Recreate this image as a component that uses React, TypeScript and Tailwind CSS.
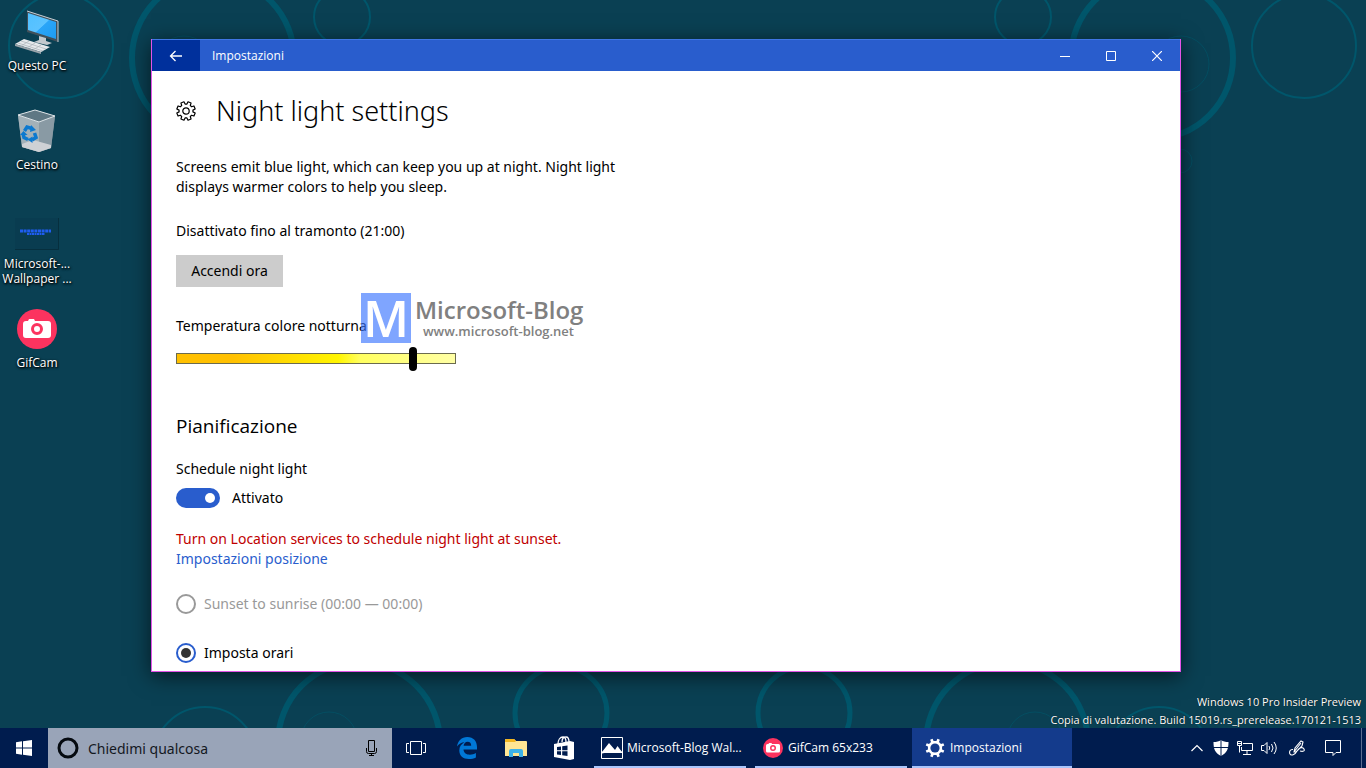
import { useState } from 'react';
import type { ReactNode } from 'react';
import clsx from 'clsx';

type Ring = { cx: number; cy: number; r: number; width: number };

// Wallpaper rings hanging from the top edge
const topRings: Ring[] = [
  { cx: 61, cy: 46, r: 52, width: 2 },
  { cx: 213, cy: 58, r: 81, width: 6 },
  { cx: 184, cy: 64, r: 28, width: 1 },
  { cx: 342, cy: 17, r: 28, width: 2 },
  { cx: 1023, cy: 17, r: 28, width: 2 },
  { cx: 1152, cy: 58, r: 81, width: 6 },
  { cx: 1181, cy: 64, r: 28, width: 1 },
  { cx: 1180, cy: 161, r: 12, width: 1 },
  { cx: 1304, cy: 46, r: 52, width: 2 },
];

// Wallpaper rings rising behind the taskbar
const bottomRings: Ring[] = [
  { cx: 205, cy: 759, r: 52, width: 2 },
  { cx: 359, cy: 743, r: 81, width: 6 },
  { cx: 329, cy: 740, r: 28, width: 1 },
  { cx: 561, cy: 713, r: 46, width: 5 },
  { cx: 804, cy: 713, r: 46, width: 5 },
  { cx: 1007, cy: 743, r: 81, width: 6 },
  { cx: 1035, cy: 740, r: 28, width: 1 },
  { cx: 1159, cy: 759, r: 52, width: 2 },
];

const Wallpaper = () => (
  <svg
    className="absolute inset-0 h-full w-full"
    viewBox="0 0 1366 768"
    preserveAspectRatio="xMidYMid slice"
    fill="none"
    stroke="#00566b"
    aria-hidden="true"
  >
    {[...topRings, ...bottomRings].map((ring) => (
      <circle
        key={`${ring.cx}-${ring.cy}`}
        cx={ring.cx}
        cy={ring.cy}
        r={ring.r}
        strokeWidth={ring.width}
        opacity={ring.width === 1 ? 0.6 : 1}
      />
    ))}
  </svg>
);

const PcIcon = () => (
  <svg width="44" height="44" viewBox="0 0 44 44" aria-hidden="true">
    <defs>
      <linearGradient id="screen" x1="0" y1="0" x2="1" y2="1">
        <stop offset="0" stopColor="#4fc0ff" />
        <stop offset="0.5" stopColor="#5cc3ff" />
        <stop offset="0.52" stopColor="#2aa5f8" />
        <stop offset="1" stopColor="#1d9bf0" />
      </linearGradient>
    </defs>
    <path d="M12 1l31 10v21L12 22z" fill="#41505a" />
    <path d="M12 1l31 10v21" fill="none" stroke="#c7d0d6" />
    <path d="M13 3l28 9v17L13 20z" fill="url(#screen)" />
    <path d="M24 26l7 2v3l6 2-5 2-13-3 5-2z" fill="#c3c9ce" />
    <path d="M9 29l26 8-9 5L0 34z" fill="#e6e9ec" />
    <path d="M26 42v2L0 36v-2z" fill="#9aa3aa" />
    <path d="M6 31l25 8M3 33l25 8M14 31l-8 5M20 33l-8 5M26 35l-8 5" stroke="#aab1b7" strokeWidth="0.7" />
  </svg>
);

const BinIcon = () => (
  <svg width="40" height="44" viewBox="0 0 40 44" aria-hidden="true">
    <path d="M1 6l17-5 20 6-4 32-12 4L5 38z" fill="#81929b" />
    <path d="M1 6l21 7v30L5 38z" fill="#a3b1b8" />
    <path d="M22 13l16-6-4 32-12 4z" fill="#899aa4" />
    <path d="M1 6l17-5 20 6-16 6z" fill="#5f7884" stroke="#dce3e7" />
    <path d="M5 35l11-4 18 5v3l-12 4-17-5z" fill="#ced1d5" />
    <g fill="none" stroke="#0c79cf" strokeWidth="3.500">
      <path d="M7.500 22l2.500-4 5 1.500" />
      <path d="M17.500 24l1.500 4.500-4 2.500" />
      <path d="M11 30.500l-4-2-1-4" />
    </g>
    <path d="M14 16l5 5-6 2zM15.500 27.500v6.500l-5-3.500zM3 26l3.500-4 4 4z" fill="#0c79cf" />
  </svg>
);

const WallpaperFileIcon = () => (
  <svg width="44" height="32" viewBox="0 0 44 32" aria-hidden="true">
    <rect width="44" height="32" fill="#093c50" />
    <path d="M0 31.5h43.500V0" fill="none" stroke="#062f3e" />
    <path d="M5 13h31" stroke="#1e5df0" strokeWidth="3" strokeDasharray="3 0.6" />
    <path d="M12 16h18" stroke="#1e5df0" strokeWidth="2" strokeDasharray="2 0.5" />
  </svg>
);

const CamIcon = ({ size }: { size: number }) => (
  <svg width={size} height={size} viewBox="0 0 40 40" aria-hidden="true">
    <circle cx="20" cy="20" r="20" fill="#fc335f" />
    <path d="M9 12h2l1-2h5l1 2h13a3 3 0 0 1 3 3v11a3 3 0 0 1-3 3H9a3 3 0 0 1-3-3V15a3 3 0 0 1 3-3z" fill="#fff" />
    <circle cx="20" cy="20" r="4.500" fill="#fff" stroke="#fc335f" strokeWidth="3" />
  </svg>
);

// Eight teeth around a 20x20 box, starting half a step off the vertical
const gear = (outer: number, root: number, tip: number, base: number) => {
  const at = (radius: number, deg: number) => {
    const a = (deg * Math.PI) / 180;
    return `${(10 + radius * Math.sin(a)).toFixed(2)} ${(10 - radius * Math.cos(a)).toFixed(2)}`;
  };
  const points = Array.from({ length: 8 }, (_, i) => {
    const mid = i * 45 + 22.5;
    return [at(root, mid - base), at(outer, mid - tip), at(outer, mid + tip), at(root, mid + base)].join('L');
  });
  return `M${points.join('L')}Z`;
};

const SettingsIcon = () => (
  <svg width="20" height="20" viewBox="0 0 20 20" fill="none" stroke="#000" strokeWidth="1.200" aria-hidden="true">
    <path d={gear(9.4, 7, 10, 15)} strokeLinejoin="round" />
    <circle cx="10" cy="10" r="3.200" />
  </svg>
);

const SettingsTaskIcon = () => (
  <svg width="20" height="20" viewBox="0 0 20 20" aria-hidden="true">
    <path d={gear(9.6, 7.2, 8, 11)} fill="#fff" />
    <circle cx="10" cy="10" r="4.600" fill="#143b8c" />
  </svg>
);

const PhotosIcon = () => (
  <svg width="22" height="22" viewBox="0 0 22 22" aria-hidden="true">
    <path d="M.5.5h21v21H.5z" fill="none" stroke="#fff" />
    <path d="M1 15L8 6l6 7 2.500-4L21 15v1l-2.500-2-1.500 2-2.500-2-1.500 2-2.500-3-2.500 2-2-2-2.500 3L1 16.500z" fill="#fff" />
    <path d="M1 15l4-2 4-1 5 1 3-1 4 3v1H1z" fill="#fff" />
  </svg>
);

const desktopIcons = [
  { name: 'Questo PC', lines: ['Questo PC'], icon: <PcIcon /> },
  { name: 'Cestino', lines: ['Cestino'], icon: <BinIcon /> },
  { name: 'Microsoft-Blog Wallpaper', lines: ['Microsoft-...', 'Wallpaper ...'], icon: <WallpaperFileIcon />, low: true },
  { name: 'GifCam', lines: ['GifCam'], icon: <CamIcon size={40} /> },
];

const DesktopIcons = () => (
  <div className="relative flex w-[74px] flex-col pt-2">
    {desktopIcons.map((item) => (
      <button key={item.name} className="flex h-[99px] flex-col items-center text-white">
        <span className={clsx('flex h-12 justify-center', item.low ? 'items-end pb-1' : 'items-center')}>{item.icon}</span>
        <span className="pt-[2px] text-[12px] leading-[15px] whitespace-nowrap [text-shadow:1px_1px_2px_#000,0_1px_3px_#000]">
          {item.lines.map((line) => (
            <span key={line} className="block">{line}</span>
          ))}
        </span>
      </button>
    ))}
  </div>
);

const TitleBar = () => (
  <header className="flex h-8 shrink-0 items-stretch border-t border-[#3f76e4] bg-[#295dcd] font-['Open_Sans',sans-serif] text-white">
    <button aria-label="Indietro" className="flex w-12 items-center justify-center bg-[#00309c]">
      <svg width="14" height="12" viewBox="0 0 14 12" fill="none" stroke="#fff" strokeWidth="1.300">
        <path d="M13 6H1.500M6.500 1l-5 5 5 5" />
      </svg>
    </button>
    <span className="flex-1 self-center pl-3 text-[12px] leading-4">Impostazioni</span>
    <button aria-label="Riduci a icona" className="flex w-[46px] items-center justify-center">
      <svg width="10" height="10" stroke="#fff"><path d="M0 5.500h10" /></svg>
    </button>
    <button aria-label="Ingrandisci" className="flex w-[46px] items-center justify-center">
      <svg width="10" height="10" fill="none" stroke="#fff"><path d="M.5.5h9v9h-9z" /></svg>
    </button>
    <button aria-label="Chiudi" className="flex w-[46px] items-center justify-center">
      <svg width="10" height="10" stroke="#fff" strokeWidth="1.200"><path d="M0 0l10 10M10 0L0 10" /></svg>
    </button>
  </header>
);

// Blog logo laid over the settings page
const BlogMark = () => (
  <div className="pointer-events-none absolute top-[222px] left-[209px] flex font-['Open_Sans',sans-serif]">
    <span className="flex h-[50px] w-[50px] items-center justify-center bg-[#3a75ff]/65 text-[50px] leading-[50px] font-semibold text-white">
      M
    </span>
    <div className="pl-1 whitespace-nowrap text-[#808080]">
      <p className="pt-1 text-[24px] leading-[26px] font-semibold">Microsoft-Blog</p>
      <p className="pl-2 text-[13px] leading-4 font-semibold">www.microsoft-blog.net</p>
    </div>
  </div>
);

const SettingsWindow = () => {
  const [temperature, setTemperature] = useState(86);
  const [scheduled, setScheduled] = useState(true);
  const [mode, setMode] = useState('custom');

  return (
    <main className="absolute inset-x-[151px] top-[39px] bottom-24 mr-[34px] flex flex-col overflow-hidden border-x border-b border-[#e353e8] bg-white font-['Noto_Sans',sans-serif] text-[14px] leading-5 text-black shadow-[0_4px_20px_rgba(0,0,0,0.6)]">
      <TitleBar />
      <div className="relative flex-1 overflow-hidden px-6">
        <div className="flex items-center gap-5 pt-5">
          <SettingsIcon />
          <h1 className="text-[27px] leading-10 font-light">Night light settings</h1>
        </div>
        <p className="w-[460px] pt-[26px]">
          Screens emit blue light, which can keep you up at night. Night light displays warmer colors to help you sleep.
        </p>
        <p className="pt-6">Disattivato fino al tramonto (21:00)</p>
        <button className="mt-[14px] block h-8 w-[107px] bg-[#cccccc]">Accendi ora</button>
        <label htmlFor="temperature" className="block pt-[29px]">Temperatura colore notturna</label>
        <input
          id="temperature"
          type="range"
          value={temperature}
          onChange={(e) => setTemperature(Number(e.target.value))}
          className="mt-[17px] block h-[11px] w-[280px] appearance-none border border-[#6b6b4e] bg-[linear-gradient(90deg,#ffc000_0%,#ffc000_20%,#fff500_58%,#ffff60_66%,#ffffa5_100%)] [&::-webkit-slider-thumb]:h-6 [&::-webkit-slider-thumb]:w-2 [&::-webkit-slider-thumb]:appearance-none [&::-webkit-slider-thumb]:rounded-full [&::-webkit-slider-thumb]:bg-black"
        />
        <h2 className="pt-[50px] font-['Open_Sans',sans-serif] text-[19px] leading-6">Pianificazione</h2>
        <p className="pt-[21px]" id="schedule-label">Schedule night light</p>
        <label className="mt-[9px] flex h-5 items-center gap-3">
          <input
            type="checkbox"
            role="switch"
            aria-labelledby="schedule-label"
            checked={scheduled}
            onChange={(e) => setScheduled(e.target.checked)}
            className="flex h-5 w-11 appearance-none items-center justify-end rounded-full bg-[#295dcd] px-[5px] before:h-[10px] before:w-[10px] before:rounded-full before:bg-white"
          />
          <span>{scheduled ? 'Attivato' : 'Disattivato'}</span>
        </label>
        <p className="pt-[21px] text-[#c00000]">Turn on Location services to schedule night light at sunset.</p>
        <a href="#posizione" className="block w-fit text-[#295dcd]">Impostazioni posizione</a>
        <label className="mt-[25px] flex h-5 items-center gap-2 text-[#999999]">
          <input
            type="radio"
            name="mode"
            disabled
            checked={mode === 'sunset'}
            onChange={() => setMode('sunset')}
            className="h-5 w-5 appearance-none rounded-full border-2 border-[#999999]"
          />
          Sunset to sunrise (00:00 — 00:00)
        </label>
        <label className="mt-[29px] flex h-5 items-center gap-2">
          <input
            type="radio"
            name="mode"
            checked={mode === 'custom'}
            onChange={() => setMode('custom')}
            className="grid h-5 w-5 appearance-none place-items-center rounded-full border-2 border-[#295dcd] before:h-[10px] before:w-[10px] before:rounded-full before:bg-[#333333]"
          />
          Imposta orari
        </label>
        <BlogMark />
      </div>
    </main>
  );
};

const TaskButton = ({ icon, label, active }: { icon: ReactNode; label: string; active?: boolean }) => (
  <button
    className={clsx(
      'flex items-center gap-1 border-b-2 border-[#a9c5fb] pt-[2px] text-left text-[12px] whitespace-nowrap',
      active ? 'ml-[5px] w-40 bg-[#143b8c] pl-3' : 'ml-[9px] w-[152px] pl-[7px]'
    )}
  >
    <span className="flex w-[22px] shrink-0 justify-center">{icon}</span>
    {label}
  </button>
);

const PinnedApps = () => (
  <>
    <button aria-label="Visualizzazione attività" className="flex w-12 items-center justify-center">
      <svg width="20" height="14" viewBox="0 0 20 14" fill="none" stroke="#fff">
        <path d="M4.500.5h11v13h-11zM3 2.500H.5v9H3M17 2.500h2.500v9H17" />
      </svg>
    </button>
    <button aria-label="Microsoft Edge" className="flex w-[54px] items-center justify-center">
      <svg width="20" height="22" viewBox="0 0 20 22">
        <path
          d="M0 9.500C.8 4 4.500 0 10.300 0 16.500 0 20 4.300 20 10v2.500H6.500c.2 3.600 3.200 5.200 6.400 5.200 2.300 0 4.200-.6 6-1.700v4.400c-2 1.100-4.300 1.600-7 1.600C6 22 2.300 18.600 2.300 13.500c0-3.800 2-6.600 5.200-8.200C4.500 5.300 1.800 7 0 9.500zM6.600 8.800h7.600c0-2.500-1.200-4-3.600-4-2.300 0-3.700 1.700-4 4z"
          fill="#0078d7"
        />
      </svg>
    </button>
    <button aria-label="Esplora file" className="flex w-11 items-center justify-center">
      <svg width="22" height="19" viewBox="0 0 22 19">
        <path d="M0 1a1 1 0 0 1 1-1h8l2 2h10a1 1 0 0 1 1 1v14H0z" fill="#ffe694" />
        <path d="M1 0h8l2 2-1 1H0V1z" fill="#f3b61f" />
        <path d="M4 18v-6a2 2 0 0 1 2-2h10a2 2 0 0 1 2 2v6h-4v-4H8v4z" fill="#3db2e8" />
      </svg>
    </button>
    <button aria-label="Store" className="ml-[5px] flex w-[42px] items-center justify-center">
      <svg width="22" height="24" viewBox="0 0 22 24">
        <path d="M5 8c0-4 2-7 5-7 2 0 3 2 3 5M9 6c0-3 1-5 4-5 2 0 3 2 3 5" fill="none" stroke="#fff" strokeWidth="1.300" />
        <path d="M1 8l16-3 4 1v17l-4 1-16-3z" fill="#fff" />
        <path d="M4 11l4-.6v3.800H4zM9.200 10.200l5.300-.8v4.800H9.200zM4 15.300h4v3.800l-4-.6zM9.200 15.300h5.300v4.700l-5.300-.7z" fill="#001c4e" />
      </svg>
    </button>
  </>
);

const Tray = () => (
  <div className="ml-auto flex items-center">
    <button aria-label="Mostra icone nascoste" className="flex w-6 justify-center">
      <svg width="12" height="8" viewBox="0 0 12 8" fill="none" stroke="#fff" strokeWidth="1.200"><path d="M.5 7L6 1.500 11.500 7" /></svg>
    </button>
    <button aria-label="Windows Defender" className="flex w-6 justify-center">
      <svg width="16" height="16" viewBox="0 0 16 16">
        <path d="M8 0c2 1.500 4.500 2 7.500 2 0 7-1.500 11-7.500 14C2 13 .5 9 .5 2 3.500 2 6 1.500 8 0z" fill="#fff" />
        <path d="M8 0v16M0 7.500h16" stroke="#001c4e" />
      </svg>
    </button>
    <button aria-label="Rete" className="flex w-6 justify-center">
      <svg width="16" height="14" viewBox="0 0 16 14" fill="none" stroke="#fff">
        <path d="M6 2.500h9.500v7H4.500V6M.5.500h4v4h-4zM2.500 5v6.500M10 10v3M6 13.500h8M1 2.500h3" />
      </svg>
    </button>
    <button aria-label="Volume" className="flex w-6 justify-center">
      <svg width="17" height="14" viewBox="0 0 17 14" fill="none" stroke="#fff">
        <path d="M.5 4.500h2.500l3-3v11l-3-3H.5zM8 5q1.500 2 0 4M10.500 3q3 4 0 8M13 1q4.500 6 0 12" />
      </svg>
    </button>
    <button aria-label="Area di lavoro Windows Ink" className="flex w-8 justify-center">
      <svg width="17" height="17" viewBox="0 0 17 17" fill="none" stroke="#fff" strokeWidth="1.100">
        <path d="M5 12l1-4 6-7 2 1-1 4-6 6zM5 12l7-9M4 9.500C1 9 0 12 1 14s5 1 7-3 6-4 7-2-1 3-4 2" />
      </svg>
    </button>
    <button aria-label="Centro notifiche" className="flex w-10 justify-center">
      <svg width="16" height="16" viewBox="0 0 16 16" fill="none" stroke="#fff"><path d="M.5.500h15v12H11l-3 3v-3H.5z" /></svg>
    </button>
    <button aria-label="Mostra desktop" className="ml-2 h-10 w-[5px] border-l border-[#5a6c90]" />
  </div>
);

const Taskbar = () => (
  <footer className="absolute inset-x-0 bottom-0 flex h-10 items-stretch bg-[#001c4e] text-white">
    <button aria-label="Start" className="flex w-12 items-center justify-center">
      <svg width="16" height="16" viewBox="0 0 16 16" fill="#fff">
        <path d="M0 2.200L6 1.300v6.200H0zM7 1.200L16 0v7.500H7zM0 8.500h6v6.200l-6-.9zM7 8.500h9V16l-9-1.200z" />
      </svg>
    </button>
    <form className="flex w-[344px] items-center bg-[#99a4b8] px-[9px]" onSubmit={(e) => e.preventDefault()}>
      <svg width="22" height="22" viewBox="0 0 22 22" fill="none" stroke="#050a10" strokeWidth="3" aria-hidden="true">
        <circle cx="11" cy="11" r="9" />
      </svg>
      <input
        aria-label="Chiedimi qualcosa"
        placeholder="Chiedimi qualcosa"
        className="h-full flex-1 bg-transparent pl-[9px] font-['Noto_Sans',sans-serif] text-[14px] text-black outline-none placeholder:text-[#14181f]"
      />
      <button aria-label="Microfono" className="mr-[6px]">
        <svg width="11" height="16" viewBox="0 0 11 16" fill="none" stroke="#000">
          <path d="M2.500.5h6v11h-6zM.5 8v3.500q0 2 2 2h6q2 0 2-2V8M5.500 13.500v2M3 15.500h5" />
        </svg>
      </button>
    </form>
    <PinnedApps />
    <TaskButton icon={<PhotosIcon />} label="Microsoft-Blog Wal..." />
    <TaskButton icon={<CamIcon size={20} />} label="GifCam 65x233" />
    <TaskButton icon={<SettingsTaskIcon />} label="Impostazioni" active />
    <Tray />
  </footer>
);

const App = () => (
  <div className="relative h-screen overflow-hidden bg-[#0a4053] font-['Open_Sans','Noto_Sans',sans-serif]">
    <Wallpaper />
    <DesktopIcons />
    <SettingsWindow />
    <div className="absolute right-[5px] bottom-[39px] text-right text-[11px] leading-[18px] text-white [text-shadow:0_0_1px_#000]">
      <p>Windows 10 Pro Insider Preview</p>
      <p>Copia di valutazione. Build 15019.rs_prerelease.170121-1513</p>
    </div>
    <Taskbar />
  </div>
);

export default App;
